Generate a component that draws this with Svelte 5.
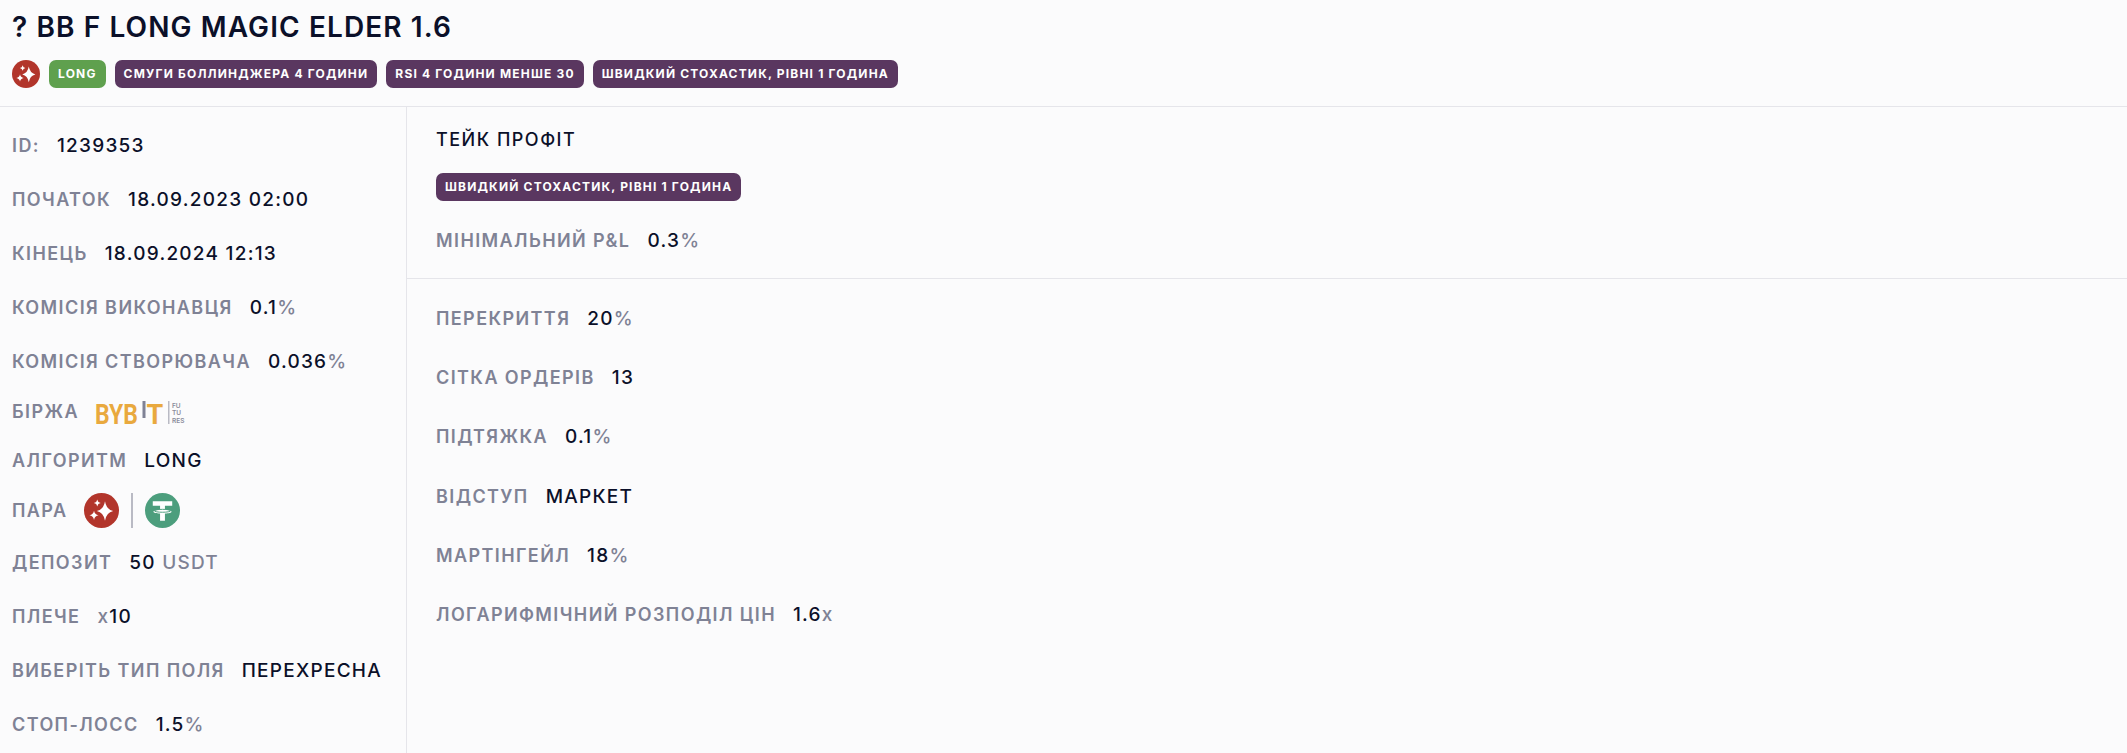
<script>
  const tags = ['СМУГИ БОЛЛИНДЖЕРА 4 ГОДИНИ', 'RSI 4 ГОДИНИ МЕНШЕ 30', 'ШВИДКИЙ СТОХАСТИК, РІВНІ 1 ГОДИНА'];
  const topLeft = [
    { label: 'ID:', value: '1239353' },
    { label: 'Початок', value: '18.09.2023 02:00' },
    { label: 'Кінець', value: '18.09.2024 12:13' },
    { label: 'Комісія виконавця', value: '0.1', unit: '%' },
    { label: 'Комісія створювача', value: '0.036', unit: '%' }
  ];
  const bottomLeft = [
    { label: 'Депозит', value: '50', unit: ' USDT' },
    { label: 'Плече', pre: 'x', value: '10' },
    { label: 'Виберіть тип поля', value: 'Перехресна' },
    { label: 'Стоп-лосс', value: '1.5', unit: '%' }
  ];
  const grid = [
    { label: 'Перекриття', value: '20', unit: '%' },
    { label: 'Сітка ордерів', value: '13' },
    { label: 'Підтяжка', value: '0.1', unit: '%' },
    { label: 'Відступ', value: 'Маркет' },
    { label: 'Мартінгейл', value: '18', unit: '%' },
    { label: 'Логарифмічний розподіл цін', value: '1.6', unit: 'x' }
  ];
</script>

{#snippet row(r)}
  <div class="row">
    <span class="label">{r.label}</span>
    <span class="value">{#if r.pre}<i>{r.pre}</i>{/if}{r.value}{#if r.unit}<i>{r.unit}</i>{/if}</span>
  </div>
{/snippet}

{#snippet sparkIcon(size)}
  <svg width={size} height={size} viewBox="0 0 36 36">
    <circle cx="18" cy="18" r="18" fill="#b2352b" />
    <path d="M21.600 8.500Q23 17 30 18.500Q23 20 21.600 28.500Q20.200 20 13.200 18.500Q20.200 17 21.600 8.500z" fill="#fff" />
    <path d="M10.300 18.300Q11 22.300 15 23Q11 23.700 10.300 27.700Q9.600 23.700 5.600 23Q9.600 22.300 10.300 18.300z" fill="#fff" />
    <path d="M13.700 6.700Q14.200 9.800 17.200 10.300Q14.200 10.800 13.700 13.900Q13.200 10.800 10.200 10.300Q13.200 9.800 13.700 6.700z" fill="#fff" />
  </svg>
{/snippet}

<div class="page">
  <header>
    <h1>? BB F Long Magic Elder 1.6</h1>
    <div class="tags">
      {@render sparkIcon(28)}
      <span class="tag green">Long</span>
      {#each tags as t}<span class="tag">{t}</span>{/each}
    </div>
  </header>

  <div class="body">
    <aside>
      {#each topLeft as r}{@render row(r)}{/each}
      <div class="row exchange">
        <span class="label">Біржа</span>
        <svg class="bybit" width="92" height="44" viewBox="0 -7 92 44">
          <g fill="#e9a93e" font-family="Roboto, sans-serif" font-weight="700" font-size="27">
            <text transform="translate(0 27) scale(.85 1)">BYB</text>
            <text transform="translate(51.500 27)">T</text>
          </g>
          <rect x="47.500" y="4" width="3" height="17" fill="#7f8295" />
          <rect x="73" y="4" width="1.500" height="23" fill="#b9bac4" />
          <g fill="#8a8c9b" font-family="Inter, sans-serif" font-weight="600" font-size="6.500">
            <text x="77" y="10.500">FU</text>
            <text x="77" y="18">TU</text>
            <text x="77" y="25.500">RES</text>
          </g>
        </svg>
      </div>
      <div class="row algo">
        <span class="label">Алгоритм</span>
        <span class="value">Long</span>
      </div>
      <div class="row pair">
        <span class="label">Пара</span>
        <div class="coins">
          {@render sparkIcon(35)}
          <span class="sep"></span>
          <svg width="35" height="35" viewBox="0 0 36 36">
            <circle cx="18" cy="18" r="18" fill="#4c9e7d" />
            <path d="M8 8.500h20v4.500h-7.500v4.300c3.700.2 6.800.9 6.800 1.900s-3.100 1.700-6.800 1.900v7.400h-5v-7.400c-3.700-.2-6.800-.9-6.800-1.900s3.100-1.700 6.800-1.900V13H8z" fill="#fff" />
            <ellipse cx="18" cy="18.300" rx="8.300" ry="1.500" fill="none" stroke="#4c9e7d" stroke-width="1" />
          </svg>
        </div>
      </div>
      {#each bottomLeft as r}{@render row(r)}{/each}
    </aside>

    <main>
      <section class="tp">
        <h2>Тейк профіт</h2>
        <span class="tag">ШВИДКИЙ СТОХАСТИК, РІВНІ 1 ГОДИНА</span>
        {@render row({ label: 'Мінімальний P&L', value: '0.3', unit: '%' })}
      </section>
      <section class="grid">
        {#each grid as r}{@render row(r)}{/each}
      </section>
    </main>
  </div>
</div>

<style>
  :global(body) {
    background: #fbfbfc;
    font-family: Inter, "Noto Sans", sans-serif;
  }

  .page {
    height: 753px;
    overflow: hidden;
    display: flex;
    flex-direction: column;
    color: #0b1029;
  }

  header {
    height: 107px;
    box-sizing: border-box;
    padding: 9px 12px 0;
    border-bottom: 1px solid #e5e5ea;
  }

  h1 {
    margin: 0 0 15px;
    font-size: 28px;
    line-height: 36px;
    font-weight: 600;
    text-transform: uppercase;
    letter-spacing: 1.1px;
  }

  .tags {
    display: flex;
    align-items: center;
    gap: 9px;
  }

  .tag {
    display: inline-block;
    height: 28px;
    line-height: 28px;
    padding: 0 9px;
    border-radius: 7px;
    background: #5a3760;
    color: #fff;
    font-size: 12px;
    font-weight: 700;
    letter-spacing: 1.180px;
    text-transform: uppercase;
    white-space: nowrap;
  }

  .tag.green {
    background: #5fa04e;
  }

  .body {
    flex: 1;
    display: flex;
    min-height: 0;
  }

  aside {
    width: 407px;
    box-sizing: border-box;
    padding: 27.500px 0 0 12px;
    border-right: 1px solid #e5e5ea;
  }

  main {
    flex: 1;
  }

  .row {
    display: flex;
    align-items: center;
    gap: 17px;
    height: 22px;
    margin-bottom: 32px;
    white-space: nowrap;
  }

  .label {
    font-size: 18px;
    font-weight: 600;
    letter-spacing: 1.400px;
    text-transform: uppercase;
    color: #7f8295;
  }

  .value {
    font-size: 19px;
    font-weight: 500;
    letter-spacing: 1.250px;
    text-transform: uppercase;
  }

  .value i {
    font-style: normal;
    color: #7f8295;
    text-transform: none;
  }

  .exchange {
    margin-bottom: 27px;
    margin-top: -4px;
  }

  .bybit {
    margin-left: -1px;
  }

  .algo {
    margin-bottom: 28px;
  }

  .pair {
    margin-bottom: 30px;
  }

  .coins {
    display: flex;
    align-items: center;
    gap: 12px;
  }

  .sep {
    width: 2px;
    height: 35px;
    background: #b9bac4;
  }

  .tp {
    padding: 22px 29px 0;
    height: 172px;
    box-sizing: border-box;
    border-bottom: 1px solid #e5e5ea;
  }

  h2 {
    margin: 0 0 22px;
    font-size: 18px;
    line-height: 22px;
    font-weight: 500;
    letter-spacing: 1.500px;
    text-transform: uppercase;
  }

  .tp .row {
    margin-top: 28px;
  }

  .grid {
    padding: 28px 29px 0;
  }

  .grid .row {
    margin-bottom: 37.400px;
  }
</style>
